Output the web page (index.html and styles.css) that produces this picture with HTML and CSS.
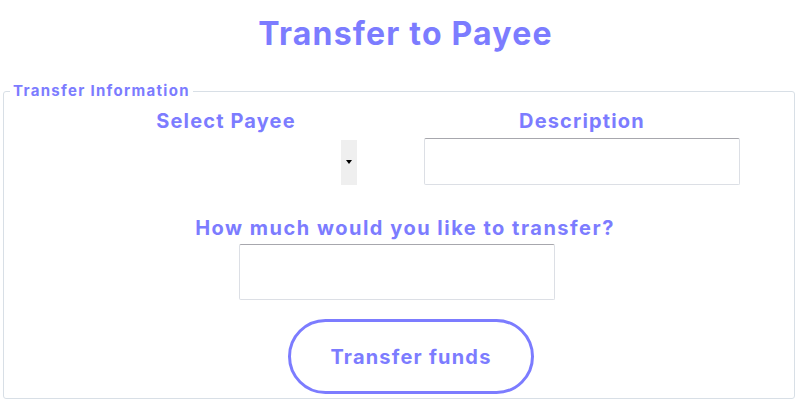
FILE: index.html
```html
<!DOCTYPE html>
<html>
<head>
<meta charset="utf-8">
<link rel="stylesheet" href="styles.css">
</head>
<body>
<h1 class="title">Transfer to Payee</h1>
<form class="form">
  <fieldset class="box">
    <legend class="legend">Transfer Information</legend>
    <div class="cols">
      <div class="col">
        <label class="label">Select Payee</label>
        <span class="select-wrap"><select class="select"></select></span>
      </div>
      <div class="col">
        <label class="label">Description</label>
        <input class="input input-desc" type="text">
      </div>
    </div>
    <div class="amount">
      <label class="label label-amount">How much would you like to transfer?</label>
      <input class="input input-amount" type="text">
    </div>
    <div class="actions">
      <button class="btn" type="button">Transfer funds</button>
    </div>
  </fieldset>
</form>
</body>
</html>
```
FILE: styles.css
```css
html, body {
  margin: 0;
  padding: 0;
  background: #ffffff;
}
body {
  font-family: "Inter", "Open Sans", sans-serif;
  color: #7c7cff;
}
.title {
  margin: 14px 0 0 0;
  height: 39px;
  line-height: 39px;
  font-size: 32px;
  font-weight: 700;
  letter-spacing: 1.2px;
  text-align: center;
}
.form {
  margin: 29px 16px 0 3px;
}
.box {
  margin: 0;
  padding: 0 0 4px 0;
  border: 1px solid #d8dfe6;
  border-radius: 3px;
  min-width: 0;
}
.legend {
  margin-left: 6px;
  padding: 0 3px;
  font-size: 15px;
  font-weight: 700;
  line-height: 18px;
  letter-spacing: 1.3px;
}
.cols {
  display: grid;
  grid-template-columns: 316px 316px;
  column-gap: 40px;
  padding-left: 64px;
  margin-top: 9px;
}
.col {
  display: flex;
  flex-direction: column;
}
.label {
  display: block;
  font-size: 20px;
  font-weight: 700;
  line-height: 24px;
  letter-spacing: 1.15px;
  text-align: center;
}
.select-wrap {
  position: relative;
  display: block;
  width: 16px;
  height: 45px;
  margin: 7px 0 0 273px;
}
.select-wrap::after {
  content: "";
  position: absolute;
  left: 5px;
  top: 20px;
  border-left: 3px solid transparent;
  border-right: 3px solid transparent;
  border-top: 4px solid #000;
}
.select {
  appearance: none;
  -webkit-appearance: none;
  display: block;
  width: 16px;
  height: 45px;
  border: none;
  border-radius: 0;
  background: #efefef;
  padding: 0;
  margin: 0;
}
.input {
  display: block;
  box-sizing: border-box;
  width: 316px;
  border: 1px solid #dcdfe5;
  border-top-color: #a7a7ad;
  border-radius: 2px;
  background: #fff;
  padding: 0 8px;
  margin: 0;
  font-size: 16px;
}
.input-desc {
  height: 47px;
  margin-top: 5px;
}
.amount {
  display: flex;
  flex-direction: column;
  align-items: center;
  margin-top: 31px;
}
.label-amount {
  padding-left: 12px;
  letter-spacing: 1.5px;
}
.input-amount {
  height: 56px;
  margin-top: 4px;
  margin-right: 4px;
}
.actions {
  display: flex;
  justify-content: center;
  margin-top: 19px;
  padding-left: 24px;
}
.btn {
  box-sizing: border-box;
  width: 246px;
  height: 75px;
  border: 3px solid #7c7cff;
  border-radius: 38px;
  background: #fff;
  color: #7c7cff;
  font-family: inherit;
  font-size: 20px;
  font-weight: 700;
  letter-spacing: 1.2px;
  cursor: pointer;
}
```
